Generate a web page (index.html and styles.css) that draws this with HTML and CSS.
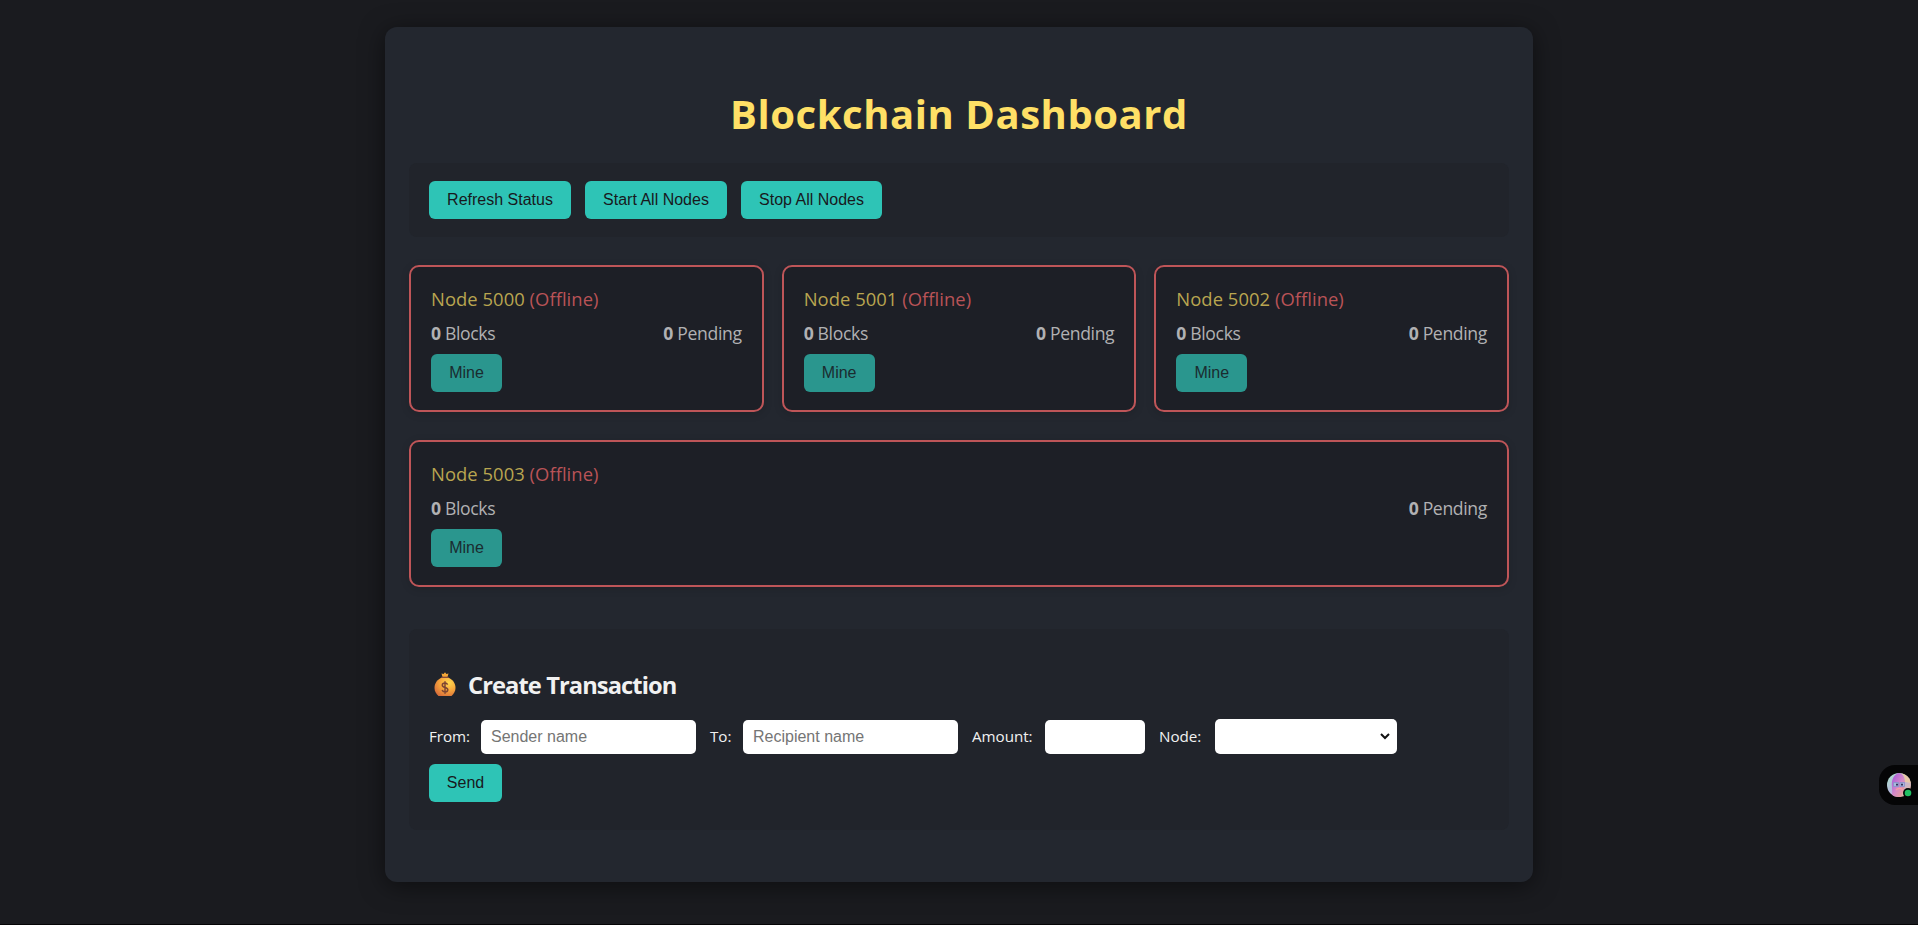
FILE: index.html
```html
<!DOCTYPE html>
<html lang="en">
<head>
<meta charset="utf-8">
<title>Blockchain Dashboard</title>
<link rel="stylesheet" href="styles.css">
</head>
<body>
<main class="container">
  <h1 class="title"><span class="title-text">Blockchain Dashboard</span></h1>
  <section class="controls">
    <button class="btn refresh">Refresh Status</button>
    <button class="btn start">Start All Nodes</button>
    <button class="btn stop">Stop All Nodes</button>
  </section>
  <section class="nodes">
    <article class="node">
      <h3 class="node-title">Node 5000 <span class="offline">(Offline)</span></h3>
      <div class="stats"><span><b>0</b> Blocks</span><span><b>0</b> Pending</span></div>
      <button class="btn mine">Mine</button>
    </article>
    <article class="node">
      <h3 class="node-title">Node 5001 <span class="offline">(Offline)</span></h3>
      <div class="stats"><span><b>0</b> Blocks</span><span><b>0</b> Pending</span></div>
      <button class="btn mine">Mine</button>
    </article>
    <article class="node">
      <h3 class="node-title">Node 5002 <span class="offline">(Offline)</span></h3>
      <div class="stats"><span><b>0</b> Blocks</span><span><b>0</b> Pending</span></div>
      <button class="btn mine">Mine</button>
    </article>
    <article class="node wide">
      <h3 class="node-title">Node 5003 <span class="offline">(Offline)</span></h3>
      <div class="stats"><span><b>0</b> Blocks</span><span><b>0</b> Pending</span></div>
      <button class="btn mine">Mine</button>
    </article>
  </section>
  <section class="transaction">
    <h2 class="form-title">
      <svg class="bag" viewBox="0 0 22 24">
        <defs>
          <radialGradient id="gold" cx=".68" cy=".28" r=".8"><stop offset="0" stop-color="#ffd84f"/><stop offset=".5" stop-color="#f8a83c"/><stop offset="1" stop-color="#d9703a"/></radialGradient>
        </defs>
        <path d="M7.5 1.6 9.6 1.9 11 .3l1.4 1.6 2.1-.3-1 3.3h-5z" fill="#f3a637"/>
        <path d="M8 5.6h6c4.500 1.700 7.500 5.700 7.500 10.200 0 3.300-1.500 6.200-4 8.200h-13C2 22 .5 19.100.5 15.800.5 11.300 3.500 7.300 8 5.600z" fill="url(#gold)"/>
        <path d="M7.500 5.300h7" stroke="#8a4a3a" stroke-width="1.300"/>
        <path d="M13.600 12.600c-.5-1-1.400-1.500-2.600-1.500-1.600 0-2.700.8-2.700 2.100 0 3 5.500 1.500 5.500 4.500 0 1.400-1.200 2.200-2.800 2.200-1.400 0-2.500-.6-2.900-1.800M11 9.300v12.400" fill="none" stroke="#7d4533" stroke-width="1.500"/>
      </svg>
      <span>Create Transaction</span>
    </h2>
    <form class="fields">
      <label class="field from"><span>From:</span><input class="control name" placeholder="Sender name"></label>
      <label class="field to"><span>To:</span><input class="control name" placeholder="Recipient name"></label>
      <label class="field amount"><span>Amount:</span><input class="control sum"></label>
      <label class="field target"><span>Node:</span><select class="control pick"></select></label>
    </form>
    <button class="btn send">Send</button>
  </section>
</main>
<aside class="assistant">
  <svg class="avatar" viewBox="0 0 26 26">
    <defs>
      <linearGradient id="ring" x1="0" y1="0" x2="1" y2="1"><stop offset="0" stop-color="#a9e6c8"/><stop offset=".5" stop-color="#b9b6e0"/><stop offset="1" stop-color="#f3b68c"/></linearGradient>
      <linearGradient id="face" x1="0" y1="0" x2="1" y2="1"><stop offset="0" stop-color="#a04fe0"/><stop offset=".55" stop-color="#d58ac8"/><stop offset="1" stop-color="#f0a684"/></linearGradient>
      <clipPath id="disc"><circle cx="12" cy="12" r="12"/></clipPath>
    </defs>
    <g clip-path="url(#disc)">
      <path d="M0 0h24v24H0z" fill="url(#ring)"/>
      <path d="M12 0c5 1 6 6 6 10 0 4-1 6-2 9l-2 5H4c2-3 1-6 1-10C4 7 7 1 12 0z" fill="url(#face)"/>
      <path d="M14 0h10v10l-6-1c0-4-1-7-4-9z" fill="#e8c8a4"/>
      <path d="M6.500 9.500h5v4h-5zM13 9.500h4.500v4H13z" fill="#a9b8dc" stroke="#8790cc" stroke-width=".8"/>
      <path d="M9 10.800h2v1.700H9zM14 10.800h2v1.700h-2z" fill="#37345e"/>
      <path d="M9 17c2-2 5-2 7 0" stroke="#f7a0a0" stroke-width="1.500" fill="none"/>
    </g>
    <circle cx="21" cy="20" r="5" fill="#050506"/>
    <circle cx="21" cy="20" r="3.300" fill="#22c063"/>
  </svg>
</aside>
</body>
</html>
```

FILE: styles.css
```css
* { box-sizing: border-box; }
html { background: #1a1b1f; }
body {
  margin: 0;
  padding-top: 27px;
  height: 925px;
  overflow: hidden;
  border-bottom: 1px solid #050506;
  background: #1a1b1f;
  color: #f1f1f1;
  font-family: "Open Sans", "Noto Sans", sans-serif;
}
h1, h2, h3 { margin: 0; }
.container {
  width: 1148px;
  height: 855px;
  margin: 0 auto;
  padding: 60px 24px 0;
  border-radius: 12px;
  background: #23272f;
  box-shadow: 0 4px 24px rgba(0, 0, 0, .5);
}
.title {
  height: 76px;
  line-height: 54px;
  text-align: center;
  color: #ffe066;
  font-size: 40px;
  letter-spacing: .550px;
  white-space: nowrap;
}
.controls {
  display: flex;
  gap: 14px;
  height: 74px;
  padding: 18px 20px;
  border-radius: 8px;
  background: #21242b;
}
.btn {
  display: block;
  height: 38px;
  padding: 0;
  border: 0;
  border-radius: 6px;
  background: #2ec4b6;
  color: #18191d;
  font: 16px "Liberation Sans", Arial, sans-serif;
}
.refresh, .start { width: 142px; }
.stop { width: 141px; }
.nodes {
  display: grid;
  grid-template-columns: repeat(3, 1fr);
  gap: 28px 18px;
  margin-top: 28px;
}
.node {
  height: 147px;
  padding: 18px 20px;
  border: 2px solid #be5558;
  border-radius: 10px;
  background: #1d1f26;
  box-shadow: 0 2px 8px rgba(0, 0, 0, .15);
}
.wide { grid-column: 1 / -1; }
.node-title {
  height: 34px;
  line-height: 28px;
  color: #b9a550;
  font-size: 18.400px;
  font-weight: 500;
  letter-spacing: .050px;
}
.offline { color: #b95357; font-weight: 400; }
.stats {
  display: flex;
  justify-content: space-between;
  height: 35px;
  line-height: 28px;
  color: #b1b1b3;
  font-size: 17.600px;
  letter-spacing: -.350px;
}
.mine { width: 71px; background: #2a968e; color: #1a2c30; }
.transaction {
  height: 201px;
  margin-top: 42px;
  padding: 38px 20px 0;
  border-radius: 8px;
  background: #21242b;
}
.form-title {
  display: flex;
  height: 52px;
  line-height: 36px;
  font-size: 23.700px;
  letter-spacing: -.920px;
  white-space: nowrap;
}
.bag { width: 22px; height: 24px; margin: 5px 12px 0 5px; }
.fields {
  display: flex;
  align-items: flex-end;
  gap: 14px;
  height: 35px;
  margin-bottom: 10px;
}
.field {
  display: flex;
  justify-content: space-between;
  height: 35px;
  align-items: flex-end;
  line-height: 35px;
  font-size: 15.200px;
  letter-spacing: -.050px;
}
.from { width: 267px; }
.to { width: 248px; }
.amount { width: 173px; }
.target { width: 238px; }
.control {
  height: 34px;
  padding: 0 10px;
  border: 0;
  border-radius: 5px;
  background: #fff;
  color: #111;
  font: 16px "Liberation Sans", Arial, sans-serif;
}
.name { width: 215px; }
.sum { width: 100px; }
.pick { width: 182px; height: 35px; padding: 0; border-right: 4px solid #fff; }
.send { width: 73px; }
.assistant {
  position: absolute;
  top: 765px;
  right: 0;
  width: 39px;
  height: 40px;
  padding: 8px 0 0 8px;
  border-radius: 16px 0 0 16px;
  background: #050506;
}
.avatar { display: block; width: 26px; height: 26px; }
```
